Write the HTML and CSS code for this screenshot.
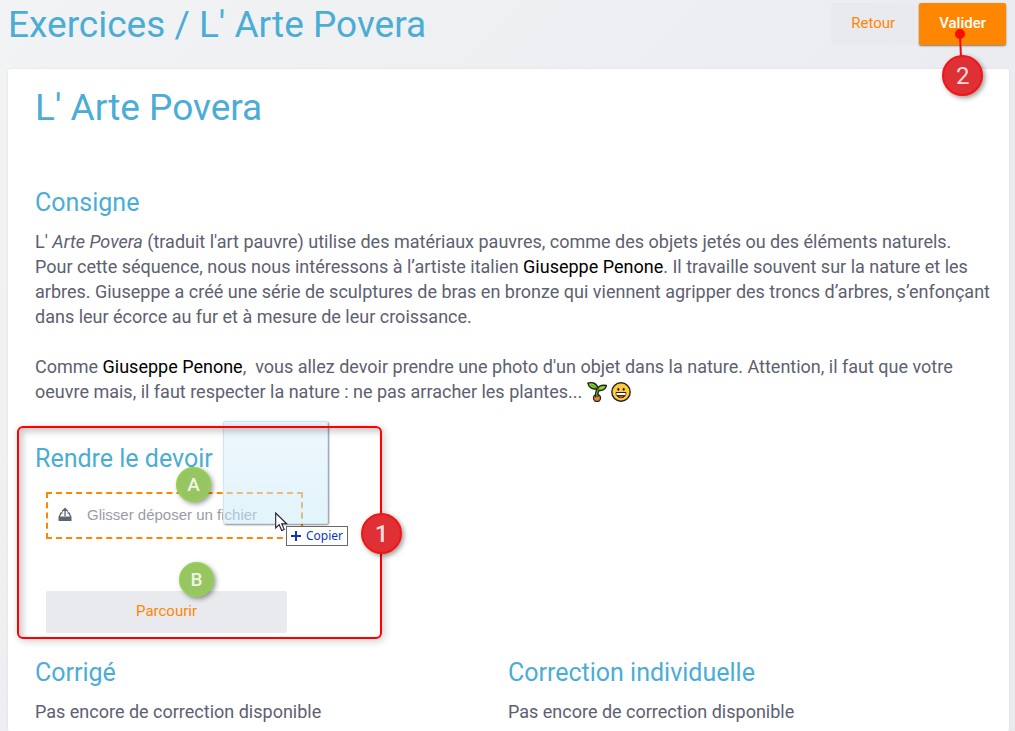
FILE: index.html
```html
<!DOCTYPE html>
<html lang="fr">
<head>
<meta charset="utf-8">
<meta name="viewport" content="width=device-width, initial-scale=1">
<title>Exercices / L' Arte Povera</title>
<link rel="stylesheet" href="styles.css">
</head>
<body>
<header class="topbar">
  <h1 class="title">Exercices / L' Arte Povera</h1>
  <div class="actions">
    <button class="btn btn-flat" type="button">Retour</button>
    <div class="anchor">
      <button class="btn btn-primary" type="button">Valider</button>
      <svg class="pin" width="20" height="32" viewBox="0 0 20 32" aria-hidden="true"><path d="M10 5l1 24" stroke="#f20c0c" stroke-width="2"/><circle cx="10" cy="5" r="5" fill="#f90d00"/></svg>
      <span class="marker marker-red marker-two">2</span>
    </div>
  </div>
</header>
<main class="card">
  <h2 class="title">L' Arte Povera</h2>
  <section class="consigne">
    <h3 class="heading">Consigne</h3>
    <p class="text">L' <em>Arte Povera</em> (traduit l'art pauvre) utilise des matériaux pauvres, comme des objets jetés ou des éléments naturels.<br>Pour cette séquence, nous nous intéressons à l’artiste italien <span class="name">Giuseppe Penone</span>. Il travaille souvent sur la nature et les arbres. Giuseppe a créé une série de sculptures de bras en bronze qui viennent agripper des troncs d’arbres, s’enfonçant dans leur écorce au fur et à mesure de leur croissance.</p>
    <p class="text">Comme <span class="name">Giuseppe Penone</span>,&nbsp; vous allez devoir prendre une photo d'un objet dans la nature. Attention, il faut que votre oeuvre mais, il faut respecter la nature : ne pas arracher les plantes...
      <svg class="emoji" viewBox="0 0 20 20" role="img" aria-label="pousse"><circle cx="10" cy="16" r="3.500" fill="#f0803c" stroke="#222" stroke-width="1.300"/><path d="M10 15C9 11 10 9 11.500 6.500" stroke="#222" stroke-width="3.600" fill="none"/><path d="M.8 1.200C5-.2 10 1 11 6.500 6 8 2 6 .8 1.200zM10.500 8C11 4 14 2.800 19.500 3.500 18.500 7.500 14.500 9.500 10.500 8z" fill="#8bd42d" stroke="#222" stroke-width="1.400" stroke-linejoin="round"/><path d="M10 15C9 11 10 9 11.500 6.500M4 3l6 3" stroke="#5aa51c" stroke-width="1.300" fill="none"/></svg>
      <svg class="emoji" viewBox="0 0 20 20" role="img" aria-label="sourire"><circle cx="10" cy="10" r="9.200" fill="#ffc93a" stroke="#222" stroke-width="1.400"/><ellipse cx="7.300" cy="7.300" rx="1" ry="1.500" fill="#222"/><ellipse cx="12.700" cy="7.300" rx="1" ry="1.500" fill="#222"/><path d="M5 10.500h10c0 7-10 7-10 0z" fill="#522" stroke="#222"/><path d="M5.500 11h9v2h-9z" fill="#fff"/><path d="M7.500 14.800q2.500-1.500 5 0-2.500 1.500-5 0z" fill="#ee5548"/></svg></p>
  </section>
  <section class="submit">
    <h3 class="heading">Rendre le devoir</h3>
    <div class="upload">
      <div class="dropzone">
        <svg width="14" height="15" viewBox="0 0 14 15" fill="none" aria-hidden="true"><path d="M7 9V1.500M4 4.500L7 1.500l3 3M4.500 6H3L1.200 10M9.500 6H11l1.800 4" stroke="#5b6573" stroke-width="1.300"/><path d="M.5 9.500h13V14H.5z" fill="#5b6573"/></svg>
        <span>Glisser déposer un fichier</span>
      </div>
      <button class="btn btn-browse" type="button">Parcourir</button>
    </div>
    <div class="ghost"></div>
    <div class="frame"></div>
    <span class="marker marker-red marker-one">1</span>
    <span class="marker marker-green marker-a">A</span>
    <span class="marker marker-green marker-b">B</span>
    <div class="tip"><svg width="10" height="10" viewBox="0 0 10 10" aria-hidden="true"><path d="M5 0v10M0 5h10" stroke="#0a35c8" stroke-width="2"/></svg>Copier</div>
    <svg class="cursor" width="13" height="20" viewBox="0 0 13 20" aria-hidden="true"><path d="M.7 1v15l3.500-3.300 2.500 5.800 2.500-1.100-2.500-5.600h5z" fill="#fff" stroke="#1c1c2c" stroke-width="1.100"/></svg>
  </section>
  <div class="columns">
    <section>
      <h3 class="heading">Corrigé</h3>
      <p class="text">Pas encore de correction disponible</p>
    </section>
    <section>
      <h3 class="heading">Correction individuelle</h3>
      <p class="text">Pas encore de correction disponible</p>
    </section>
  </div>
</main>
</body>
</html>
```
FILE: styles.css
```css
* { box-sizing: border-box; }

html { overflow-x: hidden; }

body {
  margin: 0;
  padding: 0 6px 0 8px;
  min-height: 100vh;
  display: flex;
  flex-direction: column;
  background: linear-gradient(135deg, #f2f3f4, #eaebef 70%);
  color: #5d6070;
  font-family: Roboto, "Liberation Sans", sans-serif;
}

h1, h2, h3, p { margin: 0; font-weight: 400; }

.topbar {
  display: flex;
  justify-content: space-between;
  align-items: flex-start;
  padding: 0 3px 19px 0;
}

.title {
  color: #4badd6;
  font-size: 37px;
  line-height: 50px;
}

.actions { display: flex; gap: 4px; padding-top: 3px; }

.anchor { position: relative; }

.btn {
  border: 0;
  border-radius: 2px;
  height: 42px;
  padding: 0 20px 2px;
  font-family: inherit;
  font-size: 15px;
  color: #ff8600;
  background: #e9eaee;
}

.btn-primary {
  color: #fff;
  background: #ff8600;
  font-weight: 500;
  box-shadow: 0 1px 2px #777;
}

.card {
  flex: 1;
  background: #fff;
  border-radius: 2px;
  padding: 14px 16px 7px 27px;
  box-shadow: 0 0 2px #d8d9de;
}

.heading {
  color: #4badd6;
  font-size: 25px;
  line-height: 32px;
  margin-bottom: 10px;
}

.text { font-size: 18px; line-height: 25px; }

.text + .text { margin-top: 25px; }

.name { color: #000; }

.emoji { width: 20px; height: 20px; vertical-align: -4px; }

.consigne { padding-top: 54px; }

.submit { position: relative; padding-top: 39px; }

.upload {
  display: flex;
  flex-direction: column;
  align-items: flex-start;
  gap: 52px;
  padding: 7px 11px 24px;
}

.dropzone {
  display: flex;
  align-items: center;
  gap: 15px;
  width: 257px;
  height: 47px;
  padding: 0 10px 2px;
  border: 2px dashed #ff8600;
  color: #999ca6;
  font: 15px "Liberation Sans", Arial, sans-serif;
}

.btn-browse { width: 241px; }

.columns {
  display: grid;
  grid-template-columns: 1fr 1fr;
  padding-right: 12px;
}

.frame {
  position: absolute;
  left: -18px;
  top: 22px;
  width: 365px;
  height: 213px;
  border: 2px solid #f00;
  border-radius: 6px;
  box-shadow: 2px 2px 8px #0003, inset 4px 4px 6px #0003;
}

.ghost {
  position: absolute;
  left: 188px;
  top: 17px;
  width: 105px;
  height: 103px;
  border: 1px solid #cfe7f3;
  border-radius: 2px;
  background: linear-gradient(#e2f2fc99, #c6e8f780);
  box-shadow: 1px 1px 2px #0007;
}

.marker {
  position: absolute;
  display: flex;
  align-items: center;
  justify-content: center;
  border-radius: 50%;
  color: #ffffffd9;
  box-shadow: 2px 2px 5px #0006;
}

.marker-red {
  width: 41px;
  height: 41px;
  border: 2px solid #f51414;
  background: #df3035;
  font-size: 24px;
}

.marker-green {
  width: 35px;
  height: 35px;
  border: 2px solid #92d050;
  background: #97c562;
  font-size: 19px;
  font-weight: 500;
}

.marker-one { left: 326px; top: 109px; font-weight: 500; }
.marker-two { left: 23px; top: 52px; }
.marker-a { left: 141px; top: 63px; }
.marker-b { left: 144px; top: 158px; }

.pin { position: absolute; left: 31px; top: 26px; }

.tip {
  position: absolute;
  left: 251px;
  top: 122px;
  display: flex;
  align-items: center;
  gap: 5px;
  width: 62px;
  height: 20px;
  padding: 0 0 1px 4px;
  border: 1px solid #666;
  background: #fff;
  color: #0a35c8;
  font: 12px "Noto Sans", sans-serif;
}

.cursor { position: absolute; left: 240px; top: 108px; }
```
